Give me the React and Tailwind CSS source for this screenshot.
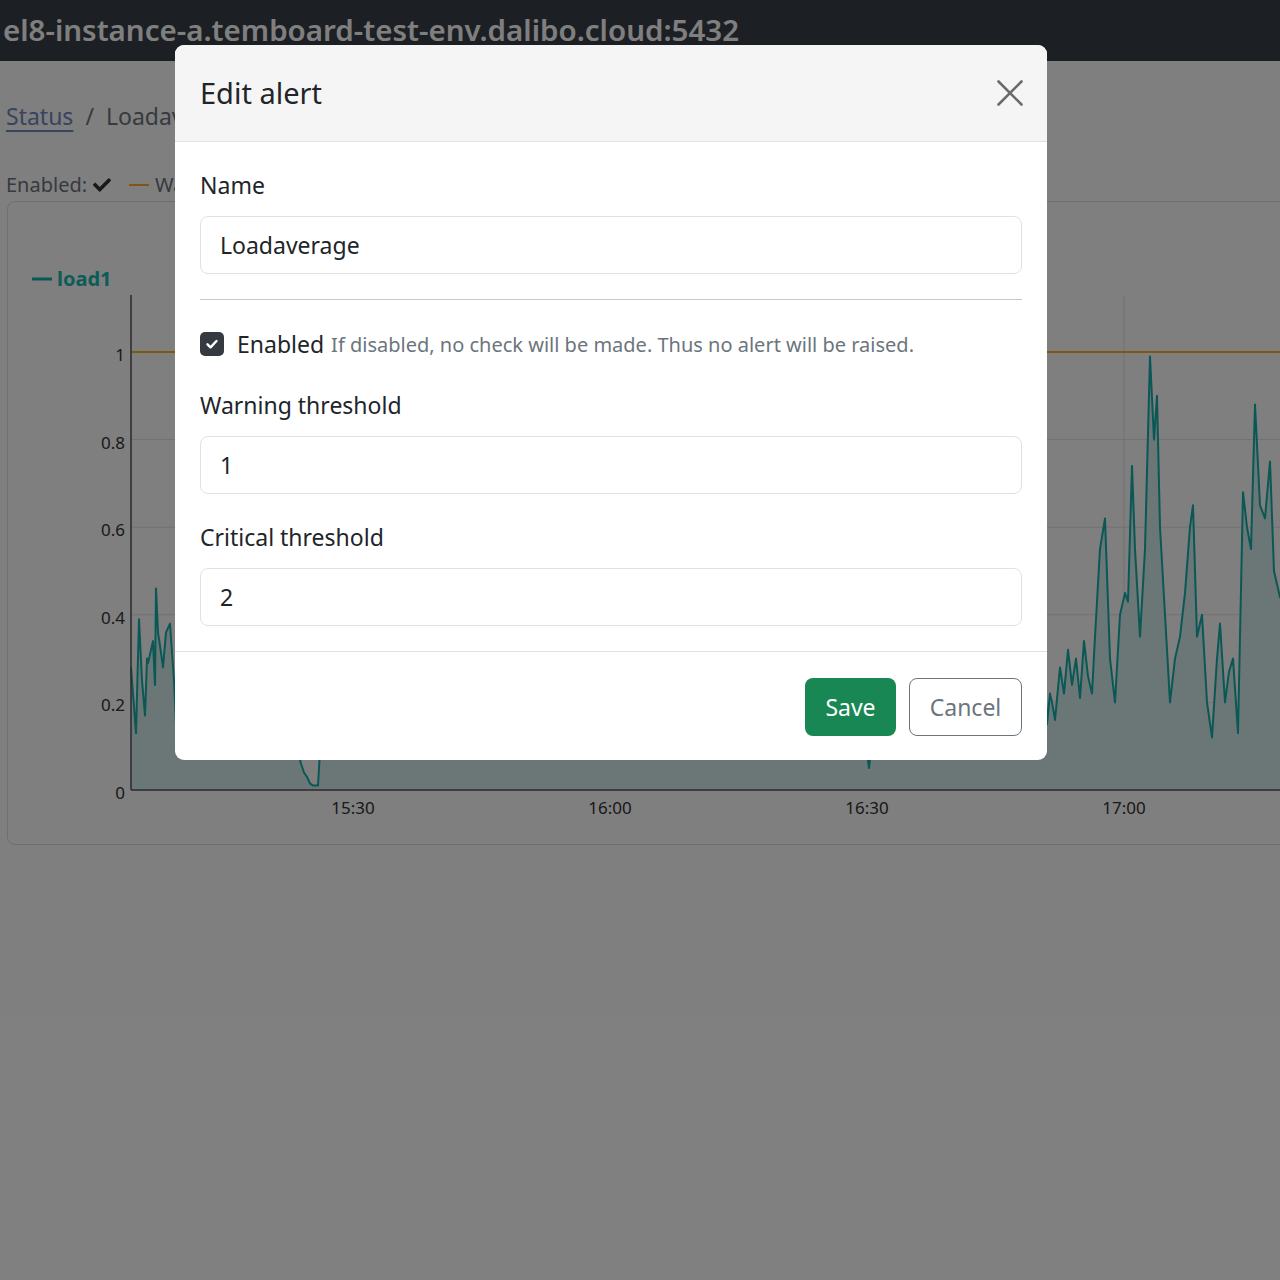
import { FaCheck } from "react-icons/fa";

const X0 = 131;
const Y0 = 791;
const SCALE = 438;

function rng(seed) {
  let s = seed;
  return () => {
    s = (s * 16807) % 2147483647;
    return (s - 1) / 2147483646;
  };
}

// hand-read points for the parts of the chart that are not hidden by the modal
const left = [
  [131, 0.28], [136, 0.13], [139, 0.39], [142, 0.25], [145, 0.17], [147, 0.3], [148, 0.29],
  [153, 0.34], [155, 0.24], [156, 0.46], [158, 0.36], [160, 0.33], [163, 0.28], [166, 0.36],
  [170, 0.38], [174, 0.25],
];
const dips = [
  [298, 0.09], [301, 0.06], [304, 0.04], [307, 0.03], [310, 0.015], [313, 0.01], [318, 0.01],
  [320, 0.09], [866, 0.1], [869, 0.05], [872, 0.11],
];
const right = [
  [1047, 0.15], [1050, 0.22], [1052, 0.2], [1055, 0.16], [1060, 0.28], [1064, 0.22], [1068, 0.32],
  [1072, 0.24], [1076, 0.3], [1080, 0.21], [1084, 0.34], [1088, 0.26], [1092, 0.22], [1095, 0.35],
  [1100, 0.55], [1105, 0.62], [1110, 0.3], [1115, 0.2], [1120, 0.4], [1125, 0.45], [1128, 0.43],
  [1132, 0.74], [1135, 0.55], [1140, 0.35], [1145, 0.55], [1150, 0.99], [1154, 0.8], [1157, 0.9],
  [1160, 0.6], [1165, 0.4], [1170, 0.2], [1175, 0.3], [1180, 0.35], [1185, 0.45], [1190, 0.6],
  [1193, 0.65], [1197, 0.35], [1202, 0.4], [1207, 0.2], [1212, 0.12], [1217, 0.3], [1220, 0.38],
  [1225, 0.2], [1229, 0.27], [1233, 0.3], [1238, 0.13], [1243, 0.68], [1247, 0.6], [1251, 0.55],
  [1255, 0.88], [1260, 0.65], [1265, 0.62], [1270, 0.75], [1274, 0.5], [1280, 0.44], [1290, 0.5],
  [1300, 0.4],
];

function buildSeries() {
  const r = rng(42);
  const mid = [];
  for (let x = 177; x < 1045; x += 3) {
    if ((x > 294 && x < 324) || (x > 862 && x < 876)) continue;
    mid.push([x, 0.1 + r() * 0.35]);
  }
  return [...left, ...mid, ...dips, ...right].sort((a, b) => a[0] - b[0]);
}

const series = buildSeries();
const pts = series.map(([x, v]) => `${x},${(Y0 - v * SCALE).toFixed(1)}`);
const linePath = "M" + pts.join(" L");
const areaPath = `${linePath} L1300,${Y0} L${X0},${Y0} Z`;

const yTicks = [0, 0.2, 0.4, 0.6, 0.8, 1];
const xTicks = [
  [353, "15:30"],
  [610, "16:00"],
  [867, "16:30"],
  [1124, "17:00"],
];

const Chart = () => (
  <svg width="1300" height="642" viewBox="8 203 1300 642" className="block">
    <g stroke="#e3e3e3" strokeWidth="1">
      {yTicks.slice(1).map((v) => (
        <line key={v} x1={X0} x2="1300" y1={Y0 - v * SCALE} y2={Y0 - v * SCALE} />
      ))}
      {xTicks.map(([x]) => (
        <line key={x} x1={x} x2={x} y1="296" y2={Y0} />
      ))}
    </g>
    <path d={areaPath} fill="#d6ecec" />
    <path d={linePath} fill="none" stroke="#14b0aa" strokeWidth="2" strokeLinejoin="round" />
    <line x1={X0} x2="1300" y1="353" y2="353" stroke="#ffb020" strokeWidth="2" />
    <line x1={X0} x2={X0} y1="296" y2={Y0} stroke="#555" strokeWidth="1.5" />
    <line x1={X0} x2="1300" y1={Y0} y2={Y0} stroke="#555" strokeWidth="1.5" />
    <g fill="#333" fontSize="17" fontFamily="'Noto Sans', sans-serif">
      {yTicks.map((v) => (
        <text key={v} x="125" y={Y0 - v * SCALE + 9} textAnchor="end">
          {v === 0 ? "0" : v === 1 ? "1" : v.toFixed(1)}
        </text>
      ))}
      {xTicks.map(([x, label]) => (
        <text key={x} x={x} y="815" textAnchor="middle">
          {label}
        </text>
      ))}
    </g>
    <line x1="32" x2="52" y1="280" y2="280" stroke="#14b0aa" strokeWidth="3" />
    <text x="57" y="287" fill="#18b8b0" fontSize="20" fontWeight="700" fontFamily="'Noto Sans', sans-serif">
      load1
    </text>
  </svg>
);

const Field = ({ label, value, className = "" }) => (
  <div className={className}>
    <label className="block h-[36px] leading-[36px] text-[23px] text-[#212529]">{label}</label>
    <div className="mt-[13px] flex h-[58px] items-center rounded-[8px] border border-[#dee2e6] bg-white px-[19px] text-[23px] text-[#212529]">
      {value}
    </div>
  </div>
);

const EditAlertModal = () => (
  <div className="absolute left-[175px] top-[45px] w-[872px] overflow-hidden rounded-[9px] bg-white">
    <div className="flex h-[97px] items-center justify-between border-b border-[#dee2e6] bg-[#f5f5f5] px-[25px]">
      <h5 className="pb-[2px] text-[29px] leading-none text-[#212529]">Edit alert</h5>
      <button className="mr-[-3px] flex h-[30px] w-[30px] items-center justify-center">
        <svg width="26" height="26" viewBox="0 0 26 26" stroke="#6b6b6b" strokeWidth="2.6" strokeLinecap="round">
          <line x1="1.5" y1="1.5" x2="24.5" y2="24.5" />
          <line x1="24.5" y1="1.5" x2="1.5" y2="24.5" />
        </svg>
      </button>
    </div>
    <div className="px-[25px] pb-[25px] pt-[25px]">
      <Field label="Name" value="Loadaverage" />
      <hr className="mt-[25px] border-t border-[#c6c7c8]" />
      <div className="mt-[26px] flex h-[36px] items-center">
        <span className="flex h-[24px] w-[24px] items-center justify-center rounded-[5px] bg-[#343a40]">
          <svg width="14" height="14" viewBox="0 0 14 14" fill="none" stroke="white" strokeWidth="2.4" strokeLinecap="round" strokeLinejoin="round">
            <path d="M2.5 7.3l3 3 6-6.3" />
          </svg>
        </span>
        <span className="ml-[13px] text-[23px] text-[#212529]">Enabled</span>
        <span className="ml-[7px] pt-[2px] text-[20px] text-[#6c757d]">
          If disabled, no check will be made. Thus no alert will be raised.
        </span>
      </div>
      <Field className="mt-[25px]" label="Warning threshold" value="1" />
      <Field className="mt-[25px]" label="Critical threshold" value="2" />
    </div>
    <div className="flex justify-end gap-[13px] border-t border-[#dee2e6] px-[25px] pb-[24px] pt-[26px]">
      <button className="h-[58px] w-[91px] rounded-[8px] bg-[#198754] text-[23px] text-white">Save</button>
      <button className="h-[58px] w-[113px] rounded-[8px] border border-[#6c757d] bg-white text-[23px] text-[#6c757d]">
        Cancel
      </button>
    </div>
  </div>
);

const App = () => (
  <div className="relative h-[1280px] w-[1280px] overflow-hidden bg-white font-['Noto_Sans',sans-serif]">
    <header className="flex h-[61px] items-center bg-[#383e46] pl-[3px]">
      <span className="text-[29.5px] font-semibold text-white">el8-instance-a.temboard-test-env.dalibo.cloud:5432</span>
    </header>
    <main className="w-[1310px] px-[6px]">
      <nav className="mt-[38px] flex h-[35px] items-center text-[23px]">
        <a className="text-[#7088c0] underline underline-offset-[5px]">Status</a>
        <span className="px-[12px] text-[#6c757d]">/</span>
        <span className="text-[#6c757d]">Loadaverage</span>
      </nav>
      <div className="mt-[36px] flex h-[30px] items-center text-[20px] text-[#6c757d]">
        <span>Enabled:</span>
        <FaCheck className="ml-[6px] text-[18px] text-[#333]" />
        <span className="ml-[18px] h-[2px] w-[20px] bg-[#ffb020]" />
        <span className="ml-[6px]">Warning: 1</span>
        <span className="ml-[18px] h-[2px] w-[20px] bg-[#dc3545]" />
        <span className="ml-[6px]">Critical: 2</span>
      </div>
      <div className="mt-[1px] ml-[1px] h-[644px] rounded-[8px] border border-[#dfdfdf]">
        <Chart />
      </div>
    </main>
    <div className="absolute inset-0 bg-black/50" />
    <EditAlertModal />
  </div>
);

export default App;
